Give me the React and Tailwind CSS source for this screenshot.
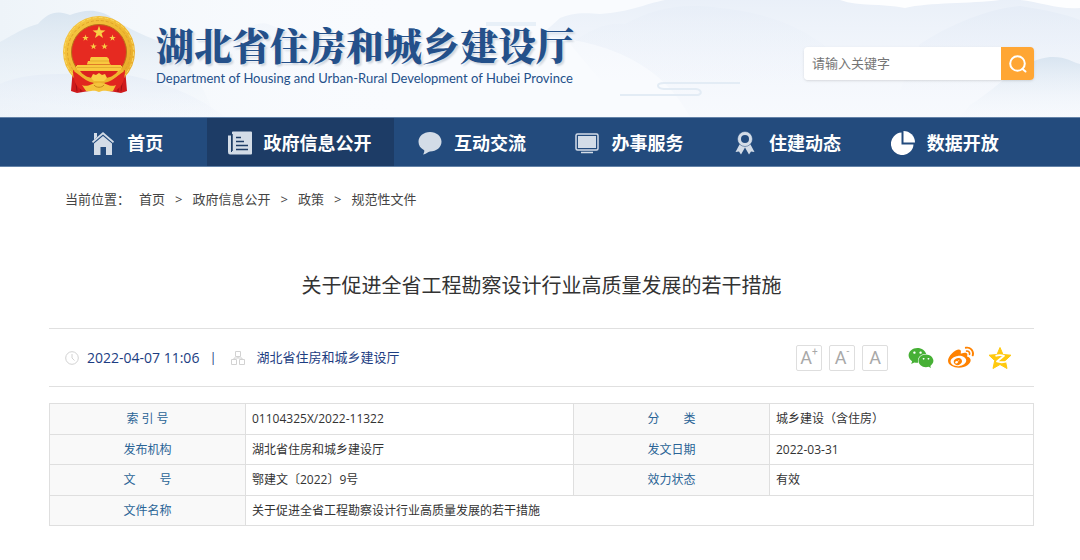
import React, { useState } from 'react';
import { FaWeixin, FaWeibo } from 'react-icons/fa';

const star = (cx, cy, r) => {
  const points = [];
  for (let i = 0; i < 10; i++) {
    const radius = i % 2 === 0 ? r : r * 0.4;
    const angle = (Math.PI / 5) * i - Math.PI / 2;
    points.push(`${(cx + radius * Math.cos(angle)).toFixed(2)},${(cy + radius * Math.sin(angle)).toFixed(2)}`);
  }
  return points.join(' ');
};

const Emblem = () => (
  <svg viewBox="0 0 72 77" className="w-[72px] h-[77px] shrink-0" aria-hidden="true">
    <defs>
      <linearGradient id="gold" x1="0" y1="0" x2="1" y2="1">
        <stop offset="0" stopColor="#f6c945" />
        <stop offset="0.5" stopColor="#f0b932" />
        <stop offset="1" stopColor="#e5a526" />
      </linearGradient>
    </defs>
    <path d="M10 52 L8 75 L14 77 L26 75 L33 64 L39 64 L46 75 L58 77 L64 75 L62 52 Z" fill="#cf1a1c" />
    <path d="M12 60 L14 75 M17 64 L18 76 M55 64 L55 76 M60 60 L58 75" stroke="#9c1114" strokeWidth="1" />
    <circle cx="36" cy="36" r="36" fill="url(#gold)" />
    <circle cx="36" cy="36" r="31.5" fill="none" stroke="#dfa32a" strokeWidth="1" strokeDasharray="3 2" />
    <circle cx="36" cy="36" r="34.5" fill="none" stroke="#fad965" strokeWidth="1" strokeDasharray="4 2" />
    <circle cx="36" cy="36" r="27.5" fill="#e62a21" stroke="#b8701a" strokeWidth="1" />
    <path d="M13 50 H59 V52 L55 57 H17 L13 52 Z" fill="#f6c43c" />
    <path d="M17 55 H55 L50 61 H22 Z" fill="#dc221f" />
    <path d="M28 41 H44 L46 43 V45 H27 V43 Z M25 45 H46 L47 48 H24 Z M14 49 H58 V54 H14 Z" fill="#f9c93f" />
    <path d="M27 45 H46 M24 48.500 H48 M14 51.500 H58" stroke="#dba02b" strokeWidth="0.700" />
    <polygon points={star(36, 16.5, 6.8)} fill="#f9cf45" />
    <polygon points={star(22.5, 22, 3.4)} fill="#f9cf45" />
    <polygon points={star(49.5, 22, 3.4)} fill="#f9cf45" />
    <polygon points={star(30.5, 30.5, 3.4)} fill="#f9cf45" />
    <polygon points={star(41.5, 30.5, 3.4)} fill="#f9cf45" />
    <path d="M10 54 C15 56 20 65 31 67 L21 75 C12 72 10 62 10 54 Z" fill="#e1261f" />
    <path d="M62 54 C57 56 52 65 41 67 L51 75 C60 72 62 62 62 54 Z" fill="#e1261f" />
    <path d="M12 54 C20 60 25 65 36 65 C47 65 52 60 60 54" fill="none" stroke="#efb52e" strokeWidth="3" />
    <path d="M30 58 L33 59 L36 57 L39 59 L42 58 L44 62 L41 65 H31 L28 62 Z" fill="#f9cf45" />
    <path d="M19 69 C26 72 28 66 36 67 C44 66 46 72 53 69 L50 75 C44 76 42 73 36 76 C30 73 28 76 23 75 Z" fill="#f5c33b" />
    <path d="M31 69 C33 72 39 72 41 69" fill="none" stroke="#c98a1d" strokeWidth="1" />
  </svg>
);

const Mountains = () => (
  <svg viewBox="0 0 1080 117" preserveAspectRatio="none" className="absolute inset-0 w-full h-full" aria-hidden="true">
    <defs>
      <linearGradient id="mist" x1="0" y1="0" x2="0" y2="1">
        <stop offset="0" stopColor="#d3e1ee" stopOpacity="0.8" />
        <stop offset="1" stopColor="#f3f7fc" stopOpacity="0.1" />
      </linearGradient>
      <linearGradient id="haze" x1="0" y1="0" x2="0" y2="1">
        <stop offset="0" stopColor="#e3ebf6" stopOpacity="0.7" />
        <stop offset="1" stopColor="#f0f4fb" stopOpacity="0.2" />
      </linearGradient>
      <linearGradient id="sky" x1="0" y1="0" x2="1" y2="0">
        <stop offset="0" stopColor="#eef4f9" />
        <stop offset="1" stopColor="#f9fbfe" stopOpacity="0" />
      </linearGradient>
    </defs>
    <rect width="420" height="117" fill="url(#sky)" />
    <path d="M0 42 C18 32 24 28 38 24 C48 12 58 10 70 15 C84 10 98 8 112 18 C130 30 146 36 170 46 C190 60 205 90 215 117 H0 Z" fill="url(#mist)" />
    <path d="M0 84 C30 70 70 76 110 72 C150 78 190 90 225 117 H0 Z" fill="url(#haze)" />
    <path d="M220 40 C240 34 255 20 268 24 C290 34 330 40 360 52 V80 H220 Z" fill="url(#haze)" opacity="0.4" />
    <path d="M560 18 C570 14 580 12 600 14 C630 12 645 4 665 0 H1080 V117 H690 C660 60 600 40 540 36 Z" fill="url(#haze)" />
    <path d="M570 44 C590 30 605 22 625 24 C650 10 680 2 720 8 C760 12 800 24 830 50 L800 80 H600 Z" fill="url(#haze)" opacity="0.5" />
    <path d="M840 0 C860 7 880 3 905 8 C930 2 970 4 1000 0 Z" fill="#ffffff" opacity="0.9" />
    <path d="M1020 0 C1040 2 1060 10 1080 8 V0 Z" fill="#ffffff" opacity="0.9" />
    <path d="M920 44 C950 24 990 8 1020 6 C1045 10 1065 14 1080 20 V90 H900 Z" fill="url(#haze)" />
    <path d="M970 105 C1000 86 1020 60 1050 57 C1065 56 1072 62 1080 64 V117 H960 Z" fill="url(#mist)" />
    <path d="M620 95 H698 C702 94 702 90 696 89 H664 C656 88 656 83 664 83 H740" fill="none" stroke="#e3ecf5" strokeWidth="2" />
    <path d="M486 24 H536" stroke="#e8f0f8" strokeWidth="4" />
  </svg>
);

const HomeIcon = () => (
  <svg viewBox="0 0 24 24" className="w-6 h-6" fill="#d3dce7" aria-hidden="true">
    <path d="M3 2 H6 V6 L3 9 Z" />
    <path d="M12 1 L23 10.5 L22 12 L12 3.5 L2 12 L1 10.5 Z" />
    <path d="M12 5 L21 12.5 V24 H15 V16 H9.500 V24 H3 V12.500 Z" />
  </svg>
);

const NewsIcon = () => (
  <svg viewBox="0 0 24 24" className="w-6 h-6" aria-hidden="true">
    <path d="M0 4.500 H3 V21 H4 V1 Q4 0.500 5 0.500 H23 Q24 0.500 24 1.500 V22.500 Q24 23.500 23 23.500 H2 Q0 23.500 0 21 Z" fill="#d3dce7" />
    <path d="M4 3 V20 M8 6.500 H13 M8 10.500 H16 M8 14.500 H20 M8 18.500 H20" stroke="#1d3c66" strokeWidth="1.500" fill="none" />
  </svg>
);

const ChatIcon = () => (
  <svg viewBox="0 0 24 24" className="w-6 h-6" aria-hidden="true">
    <path d="M12 1 C18.500 1 23.500 5.300 23.500 10.800 C23.500 16.300 18.500 20.500 12 20.500 C10 21 8 23 5 23.500 C6 22 6.500 20.500 6.200 19.200 C2.500 17.400 0.500 14.400 0.500 10.800 C0.500 5.300 5.500 1 12 1 Z" fill="#d3dce7" />
  </svg>
);

const ScreenIcon = () => (
  <svg viewBox="0 0 24 24" className="w-6 h-6" aria-hidden="true">
    <rect x="1" y="3" width="22" height="16" rx="1.500" fill="none" stroke="#d3dce7" strokeWidth="1.500" />
    <rect x="3" y="5" width="18" height="12" fill="#d3dce7" />
    <path d="M6 21.500 H18" stroke="#d3dce7" strokeWidth="1.500" />
  </svg>
);

const MedalIcon = () => (
  <svg viewBox="0 0 24 24" className="w-6 h-6" aria-hidden="true">
    <path d="M6.500 13.500 L2.500 21 L6 20.500 L8 23.500 L12 16.500 L16 23.500 L18 20.500 L21.500 21 L17.500 13.500 Z" fill="#d3dce7" />
    <circle cx="12" cy="8" r="7.500" fill="#d3dce7" stroke="#234b7d" strokeWidth="0.500" />
    <circle cx="12" cy="8" r="4" fill="#234b7d" />
  </svg>
);

const PieIcon = () => (
  <svg viewBox="0 0 24 24" className="w-6 h-6" fill="#ffffff" aria-hidden="true">
    <path d="M10.500 1.500 V13.500 H22.500 A11.300 11.300 0 1 1 10.500 1.500 Z" />
    <path d="M12.500 0 A11.500 11.500 0 0 1 24 11.500 H12.500 Z" />
  </svg>
);

const ClockIcon = () => (
  <svg viewBox="0 0 14 14" className="w-[14px] h-[14px]" fill="none" stroke="#d2d2d2" aria-hidden="true">
    <circle cx="7" cy="7" r="6.300" />
    <path d="M7 3 V7 L9.500 9.500" />
  </svg>
);

const OrgIcon = () => (
  <svg viewBox="0 0 14 14" className="w-[14px] h-[14px]" fill="none" stroke="#d2d2d2" aria-hidden="true">
    <path d="M4.500 0.500 H9.500 V5.500 H4.500 Z M0.500 8.500 H5.500 V13.500 H0.500 Z M8.500 8.500 H13.500 V13.500 H8.500 Z M7 5.500 V7 M3 8.500 V7 H11 V8.500" />
  </svg>
);

const QzoneIcon = () => (
  <svg viewBox="0 0 24 24" className="w-6 h-6" aria-hidden="true">
    <path d="M12 1.500 L15 8.500 L23 9.200 L17.300 14.500 L19 22.500 L12 18.500 L5 22.500 L6.700 14.500 L1 9.200 L9 8.500 Z" fill="#ffc90e" stroke="#ffc90e" strokeWidth="1" strokeLinejoin="round" />
    <path d="M7.500 9.800 C10.500 9 13.500 9 16 9.800 L9 15.500 C12 16.500 16 16.500 20 15" fill="none" stroke="#ffffff" strokeWidth="1.800" strokeLinejoin="round" />
  </svg>
);

const navItems = [
  { label: '首页', icon: HomeIcon },
  { label: '政府信息公开', icon: NewsIcon, active: true },
  { label: '互动交流', icon: ChatIcon },
  { label: '办事服务', icon: ScreenIcon },
  { label: '住建动态', icon: MedalIcon },
  { label: '数据开放', icon: PieIcon },
];

const crumbs = ['首页', '政府信息公开', '政策', '规范性文件'];

const rows = [
  [['索 引 号', '01104325X/2022-11322'], ['分\u3000\u3000类', '城乡建设（含住房）']],
  [['发布机构', '湖北省住房和城乡建设厅'], ['发文日期', '2022-03-31']],
  [['文\u3000\u3000号', '鄂建文〔2022〕9号'], ['效力状态', '有效']],
  [['文件名称', '关于促进全省工程勘察设计行业高质量发展的若干措施']],
];

const Header = () => {
  const [keyword, setKeyword] = useState('');

  return (
    <header className="relative bg-[#f9fbfe]">
      <Mountains />
      <div className="relative flex items-center justify-between h-[117px] pl-[63px] pr-[46px]">
        <div className="flex items-center gap-[21px] -mt-2">
          <Emblem />
          <div className="text-[#24508a] whitespace-nowrap">
            <h1 className="font-['Noto_Serif_CJK_SC','Noto_Sans_CJK_SC',serif] font-black text-[38px] leading-[46px] [text-shadow:2px_2px_2px_#cfd6df]">
              湖北省住房和城乡建设厅
            </h1>
            <p className="font-[Lato,sans-serif] text-[13px] leading-[22px]">
              Department of Housing and Urban-Rural Development of Hubei Province
            </p>
          </div>
        </div>
        <form className="flex h-[33px] mt-[10px] rounded-sm shadow-sm" onSubmit={(e) => e.preventDefault()}>
          <input
            type="text"
            aria-label="请输入关键字"
            placeholder="请输入关键字"
            value={keyword}
            onChange={(e) => setKeyword(e.target.value)}
            className="w-[197px] px-2 bg-white rounded-l-sm text-[13px] placeholder:text-[#757575] outline-none"
          />
          <button type="submit" aria-label="搜索" className="w-[33px] flex items-center justify-center bg-[#ffa634] rounded-r-sm">
            <svg viewBox="0 0 18 18" className="w-[18px] h-[18px]" fill="none" stroke="#ffffff" strokeWidth="2" strokeLinecap="round" aria-hidden="true">
              <circle cx="8.500" cy="8.500" r="7.300" />
              <path d="M13.500 14 L16.500 16.500" />
            </svg>
          </button>
        </form>
      </div>
    </header>
  );
};

const Nav = () => (
  <nav className="h-[50px] flex pl-[49px] pr-[56px] bg-[#234b7d] border-y border-[#6483a8]">
    {navItems.map(({ label, icon: Icon, active }) => (
      <a
        key={label}
        href="#"
        className={`flex items-center justify-center gap-3 pt-px pr-px text-lg font-bold text-white whitespace-nowrap ${active ? 'w-[187px] bg-[#1d3c66]' : 'flex-1'}`}
      >
        <Icon />
        <span>{label}</span>
      </a>
    ))}
  </nav>
);

const Toolbar = () => (
  <div className="flex items-center">
    <div className="flex gap-[7px] mr-5">
      {['+', '-', ''].map((sign) => (
        <button
          key={sign}
          type="button"
          className="w-[26px] h-[26px] flex items-center justify-center border border-[#dedede] rounded-xs font-[Roboto,sans-serif] text-lg text-[#a8a8a8]"
        >
          A{sign && <sup className="text-[10px] -top-[6px]">{sign}</sup>}
        </button>
      ))}
    </div>
    <div className="flex items-center gap-[14px]">
      <button type="button" aria-label="微信"><FaWeixin className="w-[26px] h-[26px] text-[#46b035]" /></button>
      <button type="button" aria-label="微博"><FaWeibo className="w-[26px] h-[26px] text-[#ff8200]" /></button>
      <button type="button" aria-label="QQ空间"><QzoneIcon /></button>
    </div>
  </div>
);

const App = () => (
  <div className="min-h-screen bg-white font-['Open_Sans','Noto_Sans_CJK_SC',sans-serif] text-[#333333]">
    <Header />
    <Nav />
    <main className="pl-[49px] pr-[46px] pb-8">
      <div className="flex items-center h-[66px] pl-4 text-[13px] text-[#444444]">
        <span className="mr-[9px]">当前位置：</span>
        {crumbs.map((crumb, i) => (
          <React.Fragment key={crumb}>
            {i > 0 && <span className="mx-[10px]">&gt;</span>}
            <a href="#">{crumb}</a>
          </React.Fragment>
        ))}
      </div>

      <h2 className="pt-[38px] pb-[27px] text-center text-xl leading-[30px]">
        关于促进全省工程勘察设计行业高质量发展的若干措施
      </h2>

      <div className="flex items-center justify-between h-[59px] pl-4 pr-[22px] border-y border-[#e0e0e0]">
        <div className="flex items-center text-[13px] text-[#1c3d82]">
          <ClockIcon />
          <span className="ml-2 text-sm">2022-04-07 11:06</span>
          <span className="mx-[10px]">|</span>
          <span className="ml-1"><OrgIcon /></span>
          <span className="ml-3">湖北省住房和城乡建设厅</span>
        </div>
        <Toolbar />
      </div>

      <table className="w-full mt-4 table-fixed border-collapse text-xs">
        <colgroup>
          <col className="w-[196px]" />
          <col className="w-1/3" />
          <col className="w-[196px]" />
          <col />
        </colgroup>
        <tbody>
          {rows.map((cells) => (
            <tr key={cells[0][0]} className="odd:h-[31px] even:h-[30px]">
              {cells.map(([name, value]) => (
                <React.Fragment key={name}>
                  <th scope="row" className="border border-[#dfdfdf] bg-[#f9f9f9] font-normal text-[#2a6496]">{name}</th>
                  <td colSpan={cells.length === 1 ? 3 : 1} className="border border-[#dfdfdf] px-[6px]">{value}</td>
                </React.Fragment>
              ))}
            </tr>
          ))}
        </tbody>
      </table>
    </main>
  </div>
);

export default App;
